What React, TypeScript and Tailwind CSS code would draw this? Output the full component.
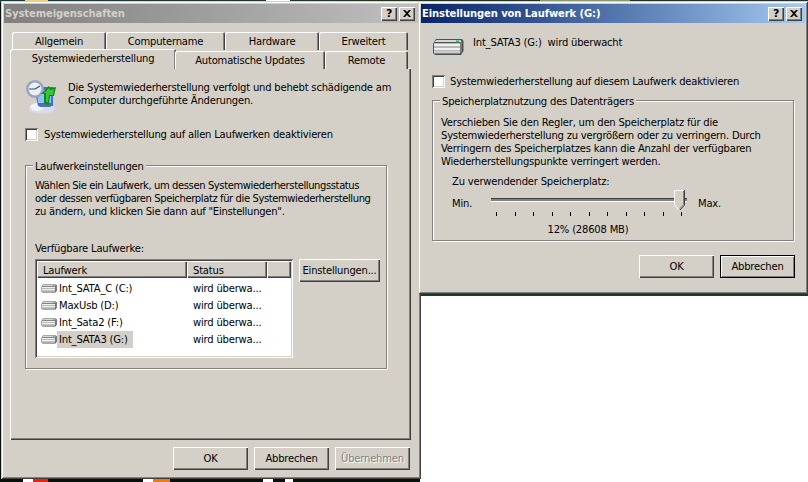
import React from 'react'

const shell = 'shadow-[inset_1px_1px_0_#d4d0c8,inset_-1px_-1px_0_#404040,inset_2px_2px_0_#fff,inset_-2px_-2px_0_#808080]'
const raised = 'shadow-[inset_1px_1px_0_#fff,inset_-1px_-1px_0_#404040,inset_-2px_-2px_0_#808080]'

function DriveIcon({ className }: { className?: string }) {
  return (
    <svg viewBox="0 0 32 18" className={className}>
      <path d="M4 1h26l1.500 2v10L29 17H3l-2-2V6z" fill="#505050" />
      <path d="M4.500 2h24l1 2H2.500z" fill="#d8d8d8" />
      <rect x="2" y="5" width="26" height="10.500" fill="#b8b8b8" />
      <rect x="2" y="6" width="26" height="2" fill="#f0f0f0" />
      <rect x="2" y="10" width="26" height="2" fill="#f0f0f0" />
      <rect x="2" y="13.500" width="26" height="1" fill="#e0e0e0" />
      <rect x="28" y="4" width="2" height="11" fill="#787878" />
      <rect x="24" y="2.500" width="3" height="2" fill="#19c34a" />
    </svg>
  )
}

function RestoreIcon() {
  return (
    <svg viewBox="0 0 32 34" className="w-8 h-[34px] shrink-0">
      <ellipse cx="17" cy="29" rx="13" ry="4.5" fill="#d8dcec" />
      <ellipse cx="12" cy="27" rx="7" ry="4" fill="#eef0fa" />
      <path d="M9 7h19v19H13z" fill="#3f6fd8" />
      <path d="M12 10h14v13H13z" fill="#8fc4f4" />
      <path d="M16 24h8l2 3H14z" fill="#5570b8" />
      <circle cx="10" cy="9" r="9" fill="#9aa4b8" />
      <circle cx="10" cy="9" r="6.5" fill="#e8f0fa" />
      <path d="M10 9l5-3M10 9H4" stroke="#404860" strokeWidth="1.2" />
      <path d="M19 24V14h-3l8-8 1 2 6-1-2 9h-4l-1 9z" fill="#0f8a20" />
      <path d="M21 22v-9l-2 0 5-5 1 2 4-1-1 6h-4l-1 7z" fill="#39c43a" />
    </svg>
  )
}

function CaptionButton({ children }: { children: React.ReactNode }) {
  return (
    <div className={`w-4 h-[14px] bg-[#d4d0c8] ${raised} flex items-center justify-center text-[11px] font-bold text-black leading-none`}>
      {children}
    </div>
  )
}

function TitleBar({ title, active }: { title: string; active?: boolean }) {
  return (
    <div
      className={`h-[19px] flex items-center justify-between pl-[1px] pr-[3px] ${
        active ? 'bg-gradient-to-r from-[#0a246a] to-[#a6caf0] text-white' : 'bg-gradient-to-r from-[#808080] to-[#c0c0c0] text-[#d4d0c8]'
      }`}
    >
      <span className="font-bold text-[10px] tracking-[-0.1px]">{title}</span>
      <div className="flex items-center">
        <CaptionButton>?</CaptionButton>
        <div className="w-[2px]" />
        <CaptionButton>
          <svg viewBox="0 0 8 7" className="w-2 h-[7px]">
            <path d="M0 0h2l2 2 2-2h2L5 3.500 8 7H6L4 5 2 7H0l3-3.500z" fill="#000" />
          </svg>
        </CaptionButton>
      </div>
    </div>
  )
}

function Btn({ label, w, disabled, primary }: { label: string; w: string; disabled?: boolean; primary?: boolean }) {
  return (
    <div
      className={`${w} h-[23px] flex items-center justify-center ${
        primary
          ? 'border border-black shadow-[inset_1px_1px_0_#fff,inset_-1px_-1px_0_#808080]'
          : raised
      } ${disabled ? "text-[#808080] [text-shadow:1px_1px_0_#fff]" : 'text-black'}`}
    >
      {label}
    </div>
  )
}

function Checkbox() {
  return <div className="w-[13px] h-[13px] bg-white shrink-0 shadow-[inset_1px_1px_0_#808080,inset_-1px_-1px_0_#fff,inset_2px_2px_0_#404040,inset_-2px_-2px_0_#d4d0c8]" />
}

function Group({ legend, className, children }: { legend: string; className: string; children: React.ReactNode }) {
  return (
    <div className={`relative border border-[#808080] shadow-[1px_1px_0_#fff,inset_1px_1px_0_#fff] ${className}`}>
      <span className="absolute -top-[6px] left-[7px] bg-[#d4d0c8] px-[2px] leading-[14px]">{legend}</span>
      {children}
    </div>
  )
}

function Tab({ label, w, top }: { label: string; w: string; top?: boolean }) {
  return (
    <div
      className={`${w} ${top ? 'h-[20px] -mr-[1px] pb-[1px]' : 'h-[18px] pt-[1px]'} flex items-center justify-center rounded-t-[2px] shadow-[inset_1px_1px_0_#fff,inset_-1px_0_0_#404040,inset_-2px_0_0_#808080] bg-[#d4d0c8]`}
    >
      {label}
    </div>
  )
}

const drives = ['Int_SATA_C (C:)', 'MaxUsb (D:)', 'Int_Sata2 (F:)', 'Int_SATA3 (G:)']

function SystemProperties() {
  return (
    <div className={`absolute left-[1px] top-[1px] w-[420px] h-[478px] bg-[#d4d0c8] ${shell} p-[3px] flex flex-col`}>
      <TitleBar title="Systemeigenschaften" />

      {/* tab rows */}
      <div className="pl-[8px] pt-[9px] flex">
        <Tab label="Allgemein" w="w-[94px]" />
        <Tab label="Computername" w="w-[119px]" />
        <Tab label="Hardware" w="w-[94px]" />
        <Tab label="Erweitert" w="w-[89px]" />
      </div>
      <div className="relative z-10 -mt-[1px] pl-[6px] flex items-end">
        <Tab label="Systemwiederherstellung" w="w-[166px]" top />
        <Tab label="Automatische Updates" w="w-[150px]" />
        <Tab label="Remote" w="w-[83px]" />
      </div>

      <div className="ml-[6px] w-[401px] h-[372px] -mt-[1px] shadow-[inset_1px_1px_0_#fff,inset_-1px_-1px_0_#404040,inset_-2px_-2px_0_#808080] px-[15px] pt-[12px]">
        <div className="flex">
          <RestoreIcon />
          <p className="ml-[11px] leading-[13px] w-[330px] whitespace-nowrap pt-[1px]">
            Die Systemwiederherstellung verfolgt und behebt schädigende am<br />
            Computer durchgeführte Änderungen.
          </p>
        </div>
        <div className="flex items-center mt-[14px] gap-[6px] h-[13px]">
          <Checkbox />
          <span>Systemwiederherstellung auf allen Laufwerken deaktivieren</span>
        </div>

        <Group legend="Laufwerkeinstellungen" className="mt-[24px] w-[362px] h-[204px] pl-[9px] pt-[13px]">
          <p className="leading-[13px] w-[345px] whitespace-nowrap tracking-[-0.4px]">
            Wählen Sie ein Laufwerk, um dessen Systemwiederherstellungsstatus<br />
            oder dessen verfügbaren Speicherplatz für die Systemwiederherstellung<br />
            <span className="tracking-[-0.25px]">zu ändern, und klicken Sie dann auf "Einstellungen".</span>
          </p>
          <p className="mt-[24px] leading-[13px]">Verfügbare Laufwerke:</p>
          <div className="flex mt-[4px]">
            <div className="w-[258px] h-[99px] bg-white shadow-[inset_1px_1px_0_#808080,inset_-1px_-1px_0_#fff,inset_2px_2px_0_#404040,inset_-2px_-2px_0_#d4d0c8] p-[2px]">
              <div className="flex h-[17px]">
                <div className={`w-[150px] pl-[6px] pt-[1px] flex items-center bg-[#d4d0c8] ${raised}`}>Laufwerk</div>
                <div className={`w-[80px] pl-[6px] pt-[1px] flex items-center bg-[#d4d0c8] ${raised}`}>Status</div>
                <div className={`flex-1 bg-[#d4d0c8] ${raised}`} />
              </div>
              <div className="pt-[2px]">
                {drives.map((d, i) => (
                  <div key={d} className="flex h-[17px] items-center">
                    <DriveIcon className="w-4 h-[9px] ml-[4px] shrink-0" />
                    <div className="w-[130px]">
                      <span className={`inline-block pl-[2px] pr-[5px] leading-[17px] ${i == 3 ? 'bg-[#d4d0c8]' : ''}`}>{d}</span>
                    </div>
                    <span className="ml-[6px]">wird überwa...</span>
                  </div>
                ))}
              </div>
            </div>
            <div className="ml-[6px]">
              <Btn label="Einstellungen..." w="w-[81px]" />
            </div>
          </div>
        </Group>
      </div>

      <div className="flex justify-end gap-[6px] mt-[7px] pr-[8px]">
        <Btn label="OK" w="w-[75px]" />
        <Btn label="Abbrechen" w="w-[75px]" />
        <Btn label="Übernehmen" w="w-[75px]" disabled />
      </div>
    </div>
  )
}

function DriveSettings() {
  const ticks = Array.from({ length: 11 })
  return (
    <div className={`absolute left-[418px] top-[1px] w-[390px] h-[293px] bg-[#d4d0c8] ${shell} p-[3px] flex flex-col`}>
      <TitleBar title="Einstellungen von Laufwerk (G:)" active />
      <div className="pl-[11px] pt-[7px]">
        <div className="flex items-center">
          <div className="w-8 h-[33px] bg-[#cfd2ca] flex items-center">
            <DriveIcon className="w-[32px] h-[18px]" />
          </div>
          <span className="ml-[9px] -mt-[9px]">Int_SATA3 (G:)&nbsp; wird überwacht</span>
        </div>
        <div className="flex items-center gap-[5px] mt-[12px] h-[13px]">
          <Checkbox />
          <span>Systemwiederherstellung auf diesem Laufwerk deaktivieren</span>
        </div>
        <Group legend="Speicherplatznutzung des Datenträgers" className="mt-[12px] w-[362px] h-[141px] pl-[8px] pt-[15px]">
          <p className="leading-[13px] w-[345px] whitespace-nowrap">
            Verschieben Sie den Regler, um den Speicherplatz für die<br />
            Systemwiederherstellung zu vergrößern oder zu verringern. Durch<br />
            Verringern des Speicherplatzes kann die Anzahl der verfügbaren<br />
            Wiederherstellungspunkte verringert werden.
          </p>
          <div className="ml-[11px] mt-[7px] leading-[13px]">Zu verwendender Speicherplatz:</div>
          <div className="flex items-start ml-[11px] mt-[4px]">
            <span className="w-[39px] leading-[13px] mt-[5px]">Min.</span>
            <div className="w-[196px] relative">
              <div className="h-[4px] mt-[6px] bg-[#808080] shadow-[inset_0_-1px_0_#fff,inset_0_1px_0_#404040]" />
              <div className="flex justify-between pl-[5px] pr-[5px] mt-[10px]">
                {ticks.map((_, i) => (
                  <div key={i} className="w-[1px] h-[4px] bg-black" />
                ))}
              </div>
              {/* thumb */}
              <svg viewBox="0 0 11 21" className="absolute left-[183px] -top-[2px] w-[11px] h-[21px]">
                <path d="M0 0h11v15l-5 6-6-6z" fill="#d4d0c8" />
                <path d="M0.500 15V.5h9.500" fill="none" stroke="#fff" />
                <path d="M10.500 0v15l-5 5.500" fill="none" stroke="#404040" />
                <path d="M.5 15l5 5.500" fill="none" stroke="#fff" />
                <path d="M9.500 1v13.500l-4 4.500" fill="none" stroke="#808080" />
              </svg>
            </div>
            <span className="ml-[11px] leading-[13px] mt-[5px]">Max.</span>
          </div>
          <div className="w-[196px] ml-[49px] text-center mt-[7px] leading-[13px]">12% (28608 MB)</div>
        </Group>
        <div className="flex justify-end gap-[6px] mt-[14px] w-[363px]">
          <Btn label="OK" w="w-[75px]" />
          <Btn label="Abbrechen" w="w-[75px]" primary />
        </div>
      </div>
    </div>
  )
}

// bits of desktop that show around the two windows
const bottomBits = [
  { w: 'w-[10px]', c: 'bg-white' },
  { w: 'w-[15px]', c: 'bg-[#f02010]' },
]

export default function App() {
  return (
    <div className="relative w-[808px] h-[482px] overflow-hidden bg-[#0b0f0c] text-[10px] tracking-[-0.2px] text-black font-['DejaVu_Sans',sans-serif]">
      <div className="absolute inset-x-0 top-0 h-[3px] bg-gradient-to-r from-[#1c3a3a] via-[#26331f] to-[#1c3030]">
        <div className="absolute left-[25px] w-[23px] h-[3px] bg-[#f0d080]" />
        <div className="absolute left-[266px] w-[24px] h-[3px] bg-white" />
        <div className="absolute left-[540px] w-[90px] h-[3px] bg-[#8a9a70]" />
      </div>
      <div className="absolute left-[23px] bottom-0 h-[3px] flex">
        {bottomBits.map((b) => (
          <div key={b.c} className={`${b.w} ${b.c}`} />
        ))}
      </div>
      <div className="absolute left-[143px] bottom-0 h-[3px] flex">
        <div className="w-[10px] bg-white" />
        <div className="w-[17px] bg-[#f07a10]" />
      </div>
      <div className="absolute left-[263px] bottom-0 h-[3px] flex">
        <div className="w-[10px] bg-white" />
        <div className="w-[12px]" />
        <div className="w-[8px] bg-white" />
      </div>
      <div className="absolute left-[420px] top-[296px] w-[388px] h-[186px] bg-white" />
      <div className="absolute left-[417px] top-[294px] w-[391px] h-[2px] bg-[#1c3a2c]" />
      <SystemProperties />
      <DriveSettings />
    </div>
  )
}
